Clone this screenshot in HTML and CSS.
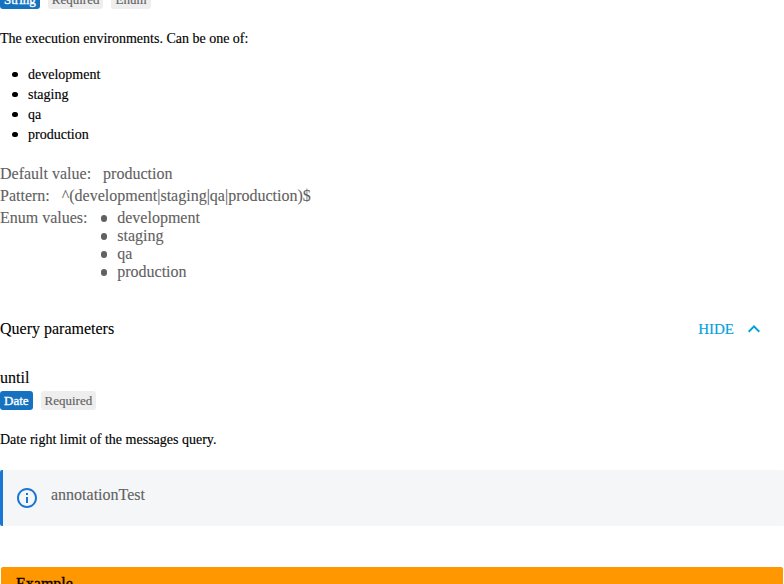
FILE: index.html
```html
<!DOCTYPE html>
<html lang="en">
<head>
<meta charset="utf-8">
<title>API documentation</title>
<link rel="stylesheet" href="styles.css">
</head>
<body>
<main>
  <div class="badges first"><span class="badge type">String</span><span class="badge">Required</span><span class="badge">Enum</span></div>
  <p class="description">The execution environments. Can be one of:</p>
  <ul class="markdown-list"><li>development</li><li>staging</li><li>qa</li><li>production</li></ul>
  <div class="details">
    <div class="row"><span class="label">Default value:</span><span>production</span></div>
    <div class="row pattern"><span class="label">Pattern:</span><span>^(development|staging|qa|production)$</span></div>
    <div class="row"><span class="label enum">Enum values:</span><ul><li>development</li><li>staging</li><li>qa</li><li>production</li></ul></div>
  </div>
  <header class="section-title"><span>Query parameters</span>
    <button class="toggle">HIDE<svg viewBox="0 0 24 24"><path d="M12 8l-6 6 1.41 1.41L12 10.83l4.59 4.58L18 14z"/></svg></button>
  </header>
  <div class="name">until</div>
  <div class="badges"><span class="badge type">Date</span><span class="badge">Required</span></div>
  <p class="description date">Date right limit of the messages query.</p>
  <aside class="annotation"><svg viewBox="0 0 24 24"><path d="M11 17h2v-6h-2v6zm1-15C6.48 2 2 6.48 2 12s4.48 10 10 10 10-4.48 10-10S17.52 2 12 2zm0 18c-4.41 0-8-3.59-8-8s3.59-8 8-8 8 3.59 8 8-3.59 8-8 8zM11 9h2V7h-2v2z"/></svg><span>annotationTest</span></aside>
  <section class="example">Example</section>
</main>
</body>
</html>
```
FILE: styles.css
```css
* { box-sizing: border-box; }
html, body { margin: 0; height: 584px; overflow: hidden; }
body { background: #fff; color: #000; font: 16px/20px "Liberation Serif", serif; -webkit-text-stroke: 0.1px currentColor; }
main { height: 584px; overflow: hidden; }
ul { margin: 0; padding: 0; list-style: none; }
li { display: flex; align-items: center; }
li::before { content: ""; width: 5.5px; height: 5.5px; margin: 0 10.5px 1px 0; border-radius: 50%; background: currentColor; }
.badges { display: flex; gap: 8px; height: 19px; }
.badges.first { margin-top: -10px; }
.badge { background: #eee; color: #616161; border-radius: 3px; padding: 0 4px; font-size: 13px; line-height: 19px; -webkit-text-stroke: 0.15px currentColor; }
.badge.type { background: #1572c0; color: #fff; -webkit-text-stroke-width: 0.35px; }
.description { margin: 20px 0 0; font-size: 14px; line-height: 20px; -webkit-text-stroke: 0.15px currentColor; }
.markdown-list { margin-top: 16px; padding-left: 12px; font-size: 14px; line-height: 20px; -webkit-text-stroke: 0.15px currentColor; }
.details { margin-top: 20px; color: #616161; line-height: 18px; }
.row { display: flex; margin-bottom: 4px; }
.row li::before { width: 6.5px; height: 6.5px; margin: 1px 10.2px 0 0; }
.label { margin-right: 12px; }
.label.enum { margin-right: 13px; }
.section-title { display: flex; align-items: center; justify-content: space-between; height: 48px; margin-top: 24px; }
.toggle { display: flex; align-items: center; border: 0; background: none; padding: 0; margin-right: 18px; color: #00a1df; font: 15px/20px "Liberation Serif", serif; -webkit-text-stroke: 0.15px currentColor; }
.toggle svg { width: 24px; height: 24px; margin-left: 8px; fill: currentColor; }
.name { margin-top: 15px; margin-bottom: 3px; }
.annotation { display: flex; height: 56px; margin-top: 20px; padding: 15px 12px; background: #f4f6f8; border-left: 3px solid #1976d2; border-radius: 2px; color: #616161; }
.annotation svg { width: 24px; height: 24px; margin: 1px 12px 0 0; fill: #1976d2; }
.example { margin: 41px 1px 0; height: 40px; padding: 7px 15px; background: #ff9800; color: #000; border-radius: 2px; -webkit-text-stroke: 0.35px currentColor; }
```
